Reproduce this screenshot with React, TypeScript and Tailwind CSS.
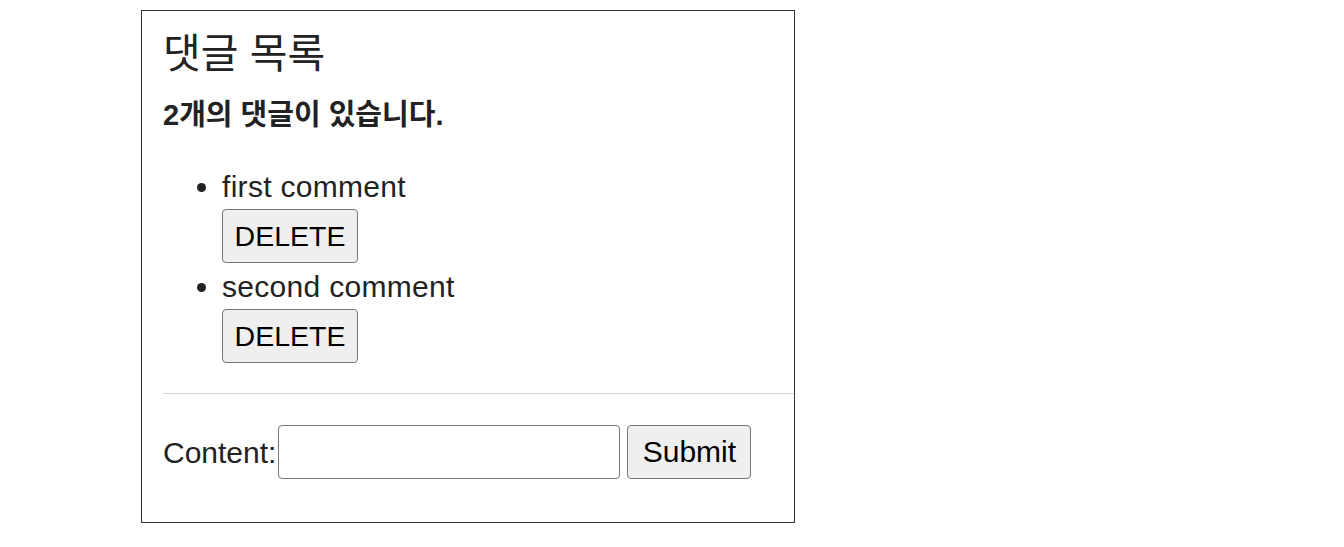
import React, { useState } from "react";

type Comment = {
    id: number;
    content: string;
};

const font = "font-['Liberation_Sans','Noto_Sans_CJK_KR',sans-serif]";

const App = () => {
    const [comments, setComments] = useState<Comment[]>([
        { id: 1, content: "first comment" },
        { id: 2, content: "second comment" },
    ]);
    const [content, setContent] = useState("");

    const removeComment = (id: number) => {
        setComments((prev) => prev.filter((c) => c.id !== id));
    };

    const addComment = (e: React.FormEvent) => {
        e.preventDefault();
        if (!content.trim()) return;
        setComments((prev) => [...prev, { id: Date.now(), content }]);
        setContent("");
    };

    return (
        <div className={`min-h-screen bg-white pt-[10px] pl-[141px] text-[#222] ${font}`}>
            <div className="w-[654px] h-[513px] border border-[#333] pl-[21px] flex flex-col">
                <h2 className="mt-[21px] text-[41px] leading-[44px] font-normal">댓글 목록</h2>
                <h4 className="mt-[24px] text-[29px] leading-[30px] font-bold">
                    {comments.length}개의 댓글이 있습니다.
                </h4>

                <ul className="mt-[41px] pl-[59px] list-disc flex flex-col">
                    {comments.map((c) => (
                        <li key={c.id} className="text-[30px] leading-[32px] tracking-[0.3px] mb-[8px]">
                            <span>{c.content}</span>
                            <div className="mt-[6px]">
                                <button
                                    onClick={() => removeComment(c.id)}
                                    className="h-[54px] w-[136px] bg-[#efefef] border border-[#767676] rounded-[4px] text-black text-[28.5px] tracking-normal leading-none"
                                >
                                    DELETE
                                </button>
                            </div>
                        </li>
                    ))}
                </ul>

                <hr className="mt-[22px] border-0 border-t border-[#d4d4d4]" />

                <form onSubmit={addComment} className="mt-[31px] flex items-center">
                    <label className="text-[30px]">Content:</label>
                    <input
                        value={content}
                        onChange={(e) => setContent(e.target.value)}
                        className="ml-[2px] w-[342px] h-[54px] border border-[#767676] rounded-[4px] bg-white px-2 text-[26px] outline-none"
                    />
                    <button
                        type="submit"
                        className="ml-[7px] w-[124px] h-[54px] bg-[#efefef] border border-[#767676] rounded-[4px] text-black text-[30px] leading-none"
                    >
                        Submit
                    </button>
                </form>
            </div>
        </div>
    );
};

export default App;
